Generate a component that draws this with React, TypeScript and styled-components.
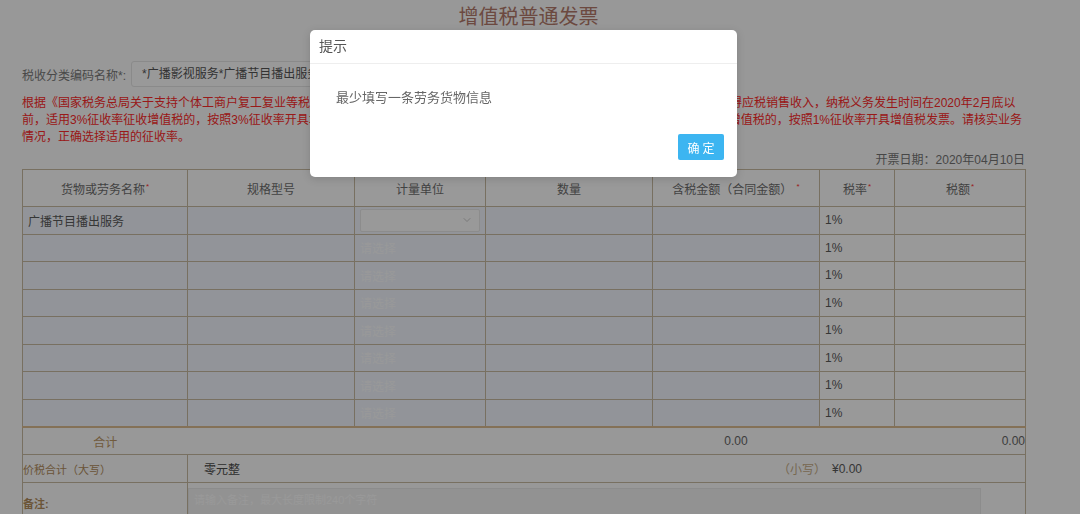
import React from "react";
import styled, { createGlobalStyle } from "styled-components";
import { ChevronDown } from "lucide-react";

const GlobalStyle = createGlobalStyle`
  html, body {
    margin: 0;
    padding: 0;
    overflow: hidden;
    background: #fdfdfd;
  }
  body {
    font-family: "Liberation Sans", "Noto Sans CJK SC", sans-serif;
    font-size: 12px;
    color: #555;
  }
`;

const Page = styled.main`
  width: 1003px;
  padding: 0 55px 0 22px;
`;

const Title = styled.h1`
  margin: 0;
  height: 34px;
  line-height: 34px;
  text-align: center;
  text-indent: 10px;
  font-size: 20px;
  font-weight: normal;
  color: #b47a6b;
`;

const CodeRow = styled.div`
  margin-top: 27px;
  height: 26px;
  display: flex;
  align-items: center;
`;

const CodeLabel = styled.label`
  flex: 0 0 109px;
  color: #7a7a7a;
  font-size: 12px;
  white-space: nowrap;
`;

const CodeInput = styled.div`
  box-sizing: border-box;
  width: 430px;
  height: 26px;
  line-height: 24px;
  padding: 0 10px;
  border: 1px solid #e6e6e6;
  border-radius: 3px;
  background: #fff;
  color: #555;
  white-space: nowrap;
`;

const Notice = styled.div`
  margin-top: 8px;
  color: #ff2a2a;
  font-size: 12px;
  line-height: 17px;
`;

const NoticeLine = styled.div`
  white-space: nowrap;
`;

const DateLine = styled.div`
  margin-top: 6px;
  height: 17px;
  line-height: 17px;
  text-align: right;
  color: #767676;
`;

const Table = styled.table`
  width: 1003px;
  border-collapse: collapse;
  table-layout: fixed;
  border: 1px solid #c9bba2;
`;

const Th = styled.th`
  height: 36px;
  padding: 0;
  border: 1px solid #c9bba2;
  font-weight: normal;
  font-size: 12px;
  color: #6e6e6e;
  background: #fff;
`;

const Req = styled.sup`
  color: #ff3030;
  font-size: 8px;
  margin-left: 1px;
`;

type Tone = "blue" | "plain";

const Td = styled.td<{ $tone?: Tone }>`
  height: 26.5px;
  padding: 0 5px;
  border: 1px solid #c9bba2;
  background: ${(p) => (p.$tone === "blue" ? "#f3f7ff" : "#fff")};
  color: #5a5a5a;
  white-space: nowrap;
`;

const Placeholder = styled.span`
  color: #ffffff;
`;

const UnitSelect = styled.div`
  box-sizing: border-box;
  height: 23px;
  display: flex;
  align-items: center;
  justify-content: flex-end;
  padding-right: 6px;
  border: 1px solid #e9e9e9;
  border-radius: 2px;
  background: #fff;
  color: #b9b9b9;
`;

const TotalsBody = styled.tbody`
  border-top: 2px solid #dcbd92;
`;

const SumLabel = styled.td`
  height: 26px;
  padding: 0;
  border: 1px solid #c9bba2;
  text-align: center;
  color: #bd9866;
  font-size: 12px;
`;

const SumValue = styled.td<{ $align: string; $flush?: boolean }>`
  height: 26px;
  padding: ${(p) => (p.$flush ? "0" : "0 5px")};
  border: 1px solid #c9bba2;
  border-left-style: hidden;
  text-align: ${(p) => p.$align};
  color: #666;
  font-size: 12px;
`;

const BrownLabel = styled.td<{ $top?: boolean }>`
  height: 27px;
  padding: ${(p) => (p.$top ? "12px 0 0" : "0")};
  vertical-align: ${(p) => (p.$top ? "top" : "middle")};
  border: 1px solid #c9bba2;
  color: #b38d5c;
  font-size: 11px;
  font-weight: ${(p) => (p.$top ? "bold" : "normal")};
  white-space: nowrap;
`;

const AmountCell = styled.td`
  height: 27px;
  padding: 0;
  border: 1px solid #c9bba2;
`;

const AmountRow = styled.div`
  display: flex;
  align-items: center;
`;

const Daxie = styled.span`
  flex: 0 0 574px;
  padding-left: 16px;
  color: #4a4a4a;
`;

const XiaoxieTag = styled.span`
  color: #c8ad88;
  margin-right: 6px;
`;

const Xiaoxie = styled.span`
  color: #5a5a5a;
`;

const RemarkCell = styled.td`
  padding: 5px 44px 0 0;
  border: 1px solid #c9bba2;
  vertical-align: top;
`;

const RemarkArea = styled.textarea`
  display: block;
  box-sizing: border-box;
  width: 793px;
  height: 56px;
  margin: 0;
  padding: 2px 5px;
  border: 1px solid #eaeaea;
  font-family: "Liberation Sans", "Noto Sans CJK SC", sans-serif;
  font-size: 11px;
  background: #f4f4f4;
  &::placeholder {
    color: #ffffff;
  }
`;

const Overlay = styled.div`
  position: fixed;
  inset: 0;
  background: rgba(0, 0, 0, 0.4);
`;

const Dialog = styled.div`
  position: fixed;
  left: 310px;
  top: 30px;
  width: 427px;
  background: #fff;
  border-radius: 5px;
  box-shadow: 0 2px 8px rgba(0, 0, 0, 0.15);
  overflow: hidden;
`;

const DialogHeader = styled.div`
  height: 33px;
  line-height: 33px;
  padding-left: 9px;
  border-bottom: 1px solid #eeeeee;
  font-size: 14px;
  color: #555;
`;

const DialogBody = styled.div`
  padding: 24px 26px 0;
  line-height: 20px;
  font-size: 13px;
  color: #666;
`;

const DialogFooter = styled.div`
  display: flex;
  justify-content: flex-end;
  padding: 26px 13px 17px;
`;

const OkButton = styled.button`
  width: 46px;
  height: 26px;
  padding: 0 0 0 3px;
  border: none;
  border-radius: 2px;
  background: #3cb5f1;
  color: #fff;
  font-family: "Liberation Sans", "Noto Sans CJK SC", sans-serif;
  font-size: 12px;
  letter-spacing: 3px;
`;

const notice = [
  "根据《国家税务总局关于支持个体工商户复工复业等税收征收管理事项的公告》规定，自三月一日至五月三十一日，小规模纳税人的取得应税销售收入，纳税义务发生时间在2020年2月底以",
  "前，适用3%征收率征收增值税的，按照3%征收率开具增值税发票；纳税义务发生时间在三月一日至五月三十一日，适用百分之一征收增值税的，按照1%征收率开具增值税发票。请核实业务",
  "情况，正确选择适用的征收率。",
];

const rows = Array.from({ length: 8 }, (_, i) => i);

export default function App() {
  return (
    <>
      <GlobalStyle />
      <Page>
        <Title>增值税普通发票</Title>
        <CodeRow>
          <CodeLabel>税收分类编码名称*:</CodeLabel>
          <CodeInput>*广播影视服务*广播节目播出服务</CodeInput>
        </CodeRow>
        <Notice>
          {notice.map((l) => (
            <NoticeLine key={l}>{l}</NoticeLine>
          ))}
        </Notice>
        <DateLine>开票日期：2020年04月10日</DateLine>
        <Table>
          <colgroup>
            <col style={{ width: 165 }} />
            <col style={{ width: 167 }} />
            <col style={{ width: 131 }} />
            <col style={{ width: 167 }} />
            <col style={{ width: 167 }} />
            <col style={{ width: 75 }} />
            <col style={{ width: 131 }} />
          </colgroup>
          <thead>
            <tr>
              <Th>
                货物或劳务名称<Req>*</Req>
              </Th>
              <Th>规格型号</Th>
              <Th>计量单位</Th>
              <Th>数量</Th>
              <Th>
                含税金额（合同金额） <Req>*</Req>
              </Th>
              <Th>
                税率<Req>*</Req>
              </Th>
              <Th>
                税额<Req>*</Req>
              </Th>
            </tr>
          </thead>
          <tbody>
            {rows.map((i) => (
              <tr key={i}>
                <Td $tone="blue">{i === 0 ? "广播节目播出服务" : ""}</Td>
                <Td $tone="blue" />
                <Td $tone="blue">
                  {i === 0 ? (
                    <UnitSelect>
                      <ChevronDown size={12} strokeWidth={1.5} />
                    </UnitSelect>
                  ) : (
                    <Placeholder>请选择</Placeholder>
                  )}
                </Td>
                <Td $tone="blue" />
                <Td $tone="blue" />
                <Td>1%</Td>
                <Td />
              </tr>
            ))}
          </tbody>
          <TotalsBody>
            <tr>
              <SumLabel>合计</SumLabel>
              <SumValue $align="left" colSpan={3} />
              <SumValue $align="center">0.00</SumValue>
              <SumValue $align="right" $flush colSpan={2}>
                0.00
              </SumValue>
            </tr>
            <tr>
              <BrownLabel>价税合计（大写）</BrownLabel>
              <AmountCell colSpan={6}>
                <AmountRow>
                  <Daxie>零元整</Daxie>
                  <XiaoxieTag>（小写）</XiaoxieTag>
                  <Xiaoxie>¥0.00</Xiaoxie>
                </AmountRow>
              </AmountCell>
            </tr>
            <tr>
              <BrownLabel $top>备注:</BrownLabel>
              <RemarkCell colSpan={6}>
                <RemarkArea placeholder="请输入备注，最大长度限制240个字符" />
              </RemarkCell>
            </tr>
          </TotalsBody>
        </Table>
      </Page>
      <Overlay />
      <Dialog>
        <DialogHeader>提示</DialogHeader>
        <DialogBody>最少填写一条劳务货物信息</DialogBody>
        <DialogFooter>
          <OkButton>确定</OkButton>
        </DialogFooter>
      </Dialog>
    </>
  );
}
